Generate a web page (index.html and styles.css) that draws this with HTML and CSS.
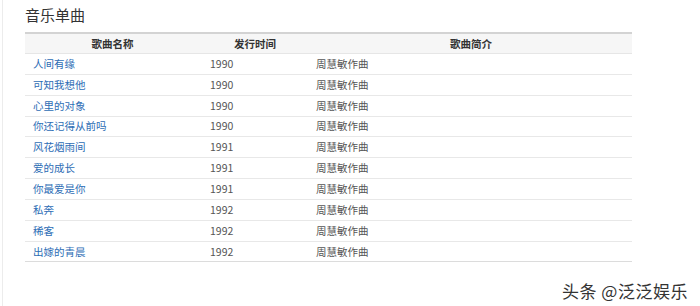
FILE: index.html
```html
<!DOCTYPE html>
<html lang="zh">
<head>
<meta charset="utf-8">
<link rel="stylesheet" href="styles.css">
</head>
<body>
<div class="page">
  <h2 class="title">音乐单曲</h2>
  <table class="songs">
    <colgroup><col class="c1"><col class="c2"><col class="c3"></colgroup>
    <thead>
      <tr><th>歌曲名称</th><th>发行时间</th><th>歌曲简介</th></tr>
    </thead>
    <tbody>
      <tr><td><a>人间有缘</a></td><td>1990</td><td>周慧敏作曲</td></tr>
      <tr><td><a>可知我想他</a></td><td>1990</td><td>周慧敏作曲</td></tr>
      <tr><td><a>心里的对象</a></td><td>1990</td><td>周慧敏作曲</td></tr>
      <tr><td><a>你还记得从前吗</a></td><td>1990</td><td>周慧敏作曲</td></tr>
      <tr><td><a>风花烟雨间</a></td><td>1991</td><td>周慧敏作曲</td></tr>
      <tr><td><a>爱的成长</a></td><td>1991</td><td>周慧敏作曲</td></tr>
      <tr><td><a>你最爱是你</a></td><td>1991</td><td>周慧敏作曲</td></tr>
      <tr><td><a>私奔</a></td><td>1992</td><td>周慧敏作曲</td></tr>
      <tr><td><a>稀客</a></td><td>1992</td><td>周慧敏作曲</td></tr>
      <tr><td><a>出嫁的青晨</a></td><td>1992</td><td>周慧敏作曲</td></tr>
    </tbody>
  </table>
  <div class="mark">头条 @泛泛娱乐</div>
</div>
</body>
</html>
```
FILE: styles.css
```css
html, body { margin: 0; padding: 0; background: #fff; }
body { font-family: "Noto Sans CJK SC", "Liberation Sans", sans-serif; }
.page {
  width: 700px;
  height: 306px;
  box-sizing: border-box;
  margin-left: 2px;
  border-left: 1px solid #ececec;
  padding: 6px 0 0 22px;
}
.title {
  margin: 0;
  font-size: 15px;
  font-weight: normal;
  color: #333;
  line-height: 18px;
}
.songs {
  margin-top: 8px;
  width: 607px;
  border-collapse: collapse;
  border-top: 2px solid #d3d3d3;
  border-bottom: 1px solid #dcdcdc;
  font-size: 10.5px;
  table-layout: fixed;
}
.c1 { width: 175px; }
.c2 { width: 110px; }
.c3 { width: 322px; }
.songs th {
  background: #f6f6f6;
  color: #333;
  font-weight: bold;
  height: 19px;
  padding: 0;
  text-align: center;
  border-bottom: 1px solid #e6e6e6;
}
.songs td {
  height: 19.85px;
  padding: 0 0 0 8px;
  color: #555;
  border-bottom: 1px solid #e8e8e8;
  line-height: 14px;
}
.songs td:nth-child(2) { padding-left: 10px; }
.songs td:nth-child(3) { padding-left: 6px; }
.songs tr:last-child td { border-bottom: none; }
.songs a { color: #2d6db5; }
.mark {
  margin: 19px 0 0 537px;
  font-size: 17px;
  color: #333;
  line-height: 20px;
  white-space: nowrap;
  letter-spacing: 0.5px;
}
```
